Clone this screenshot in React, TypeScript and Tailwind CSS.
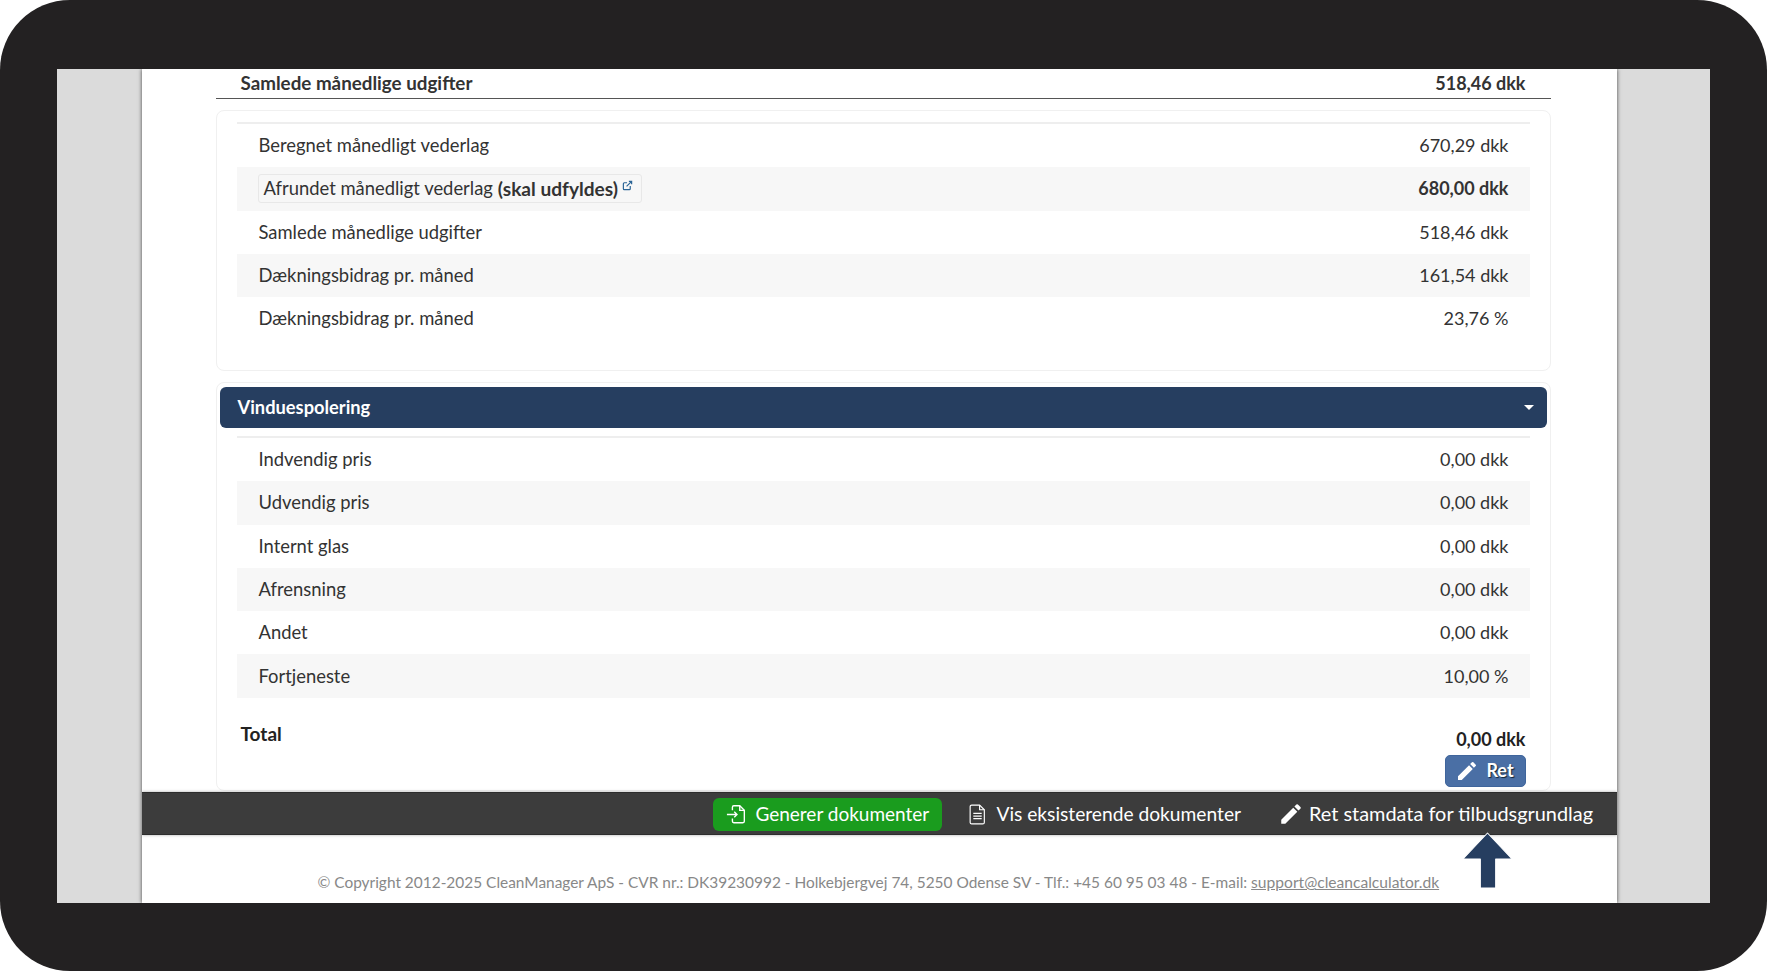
import React from "react";

const Pencil = ({ className }: { className: string }) => (
  <svg viewBox="0 0 24 24" className={className} fill="currentColor">
    <path d="M3 17.25V21h3.75L17.81 9.94l-3.75-3.75L3 17.25zM20.71 7.04a1 1 0 0 0 0-1.41l-2.34-2.34a1 1 0 0 0-1.41 0l-1.83 1.83 3.75 3.75 1.83-1.83z" />
  </svg>
);

const Row = ({ label, value, striped, bold }: { label: React.ReactNode; value: string; striped?: boolean; bold?: boolean }) => (
  <div className={`flex h-[43.3px] items-center justify-between pl-[22px] pr-[21px] leading-[27px] ${striped ? "bg-[#f7f7f7]" : ""}`}>
    <div className="text-[18.4px]">{label}</div>
    <div className={bold ? "font-bold" : ""}>{value}</div>
  </div>
);

export default function App() {
  return (
    <div className="h-[971px] w-[1767px] overflow-hidden bg-white font-['Lato',sans-serif] text-[18px] text-[#333]">
      <div className="h-[971px] rounded-[70px] bg-[#232122] pb-[68px] pl-[57px] pr-[57px] pt-[69px]">
        <div className="flex h-[834px] justify-start overflow-hidden bg-[#dbdbdb] pl-[84.5px]">
          <div className="relative flex h-[834px] w-[1475.5px] flex-col bg-white shadow-[0_0_4px_#444]">
            <div className="pl-[74px] pr-[66.5px]">
              <div className="flex h-[30px] items-center justify-between border-b border-[#555] pl-[25px] pr-[25px] font-bold">
                <span className="text-[18.8px]">Samlede månedlige udgifter</span>
                <span>518,46 dkk</span>
              </div>

              <div className="mt-[11px] h-[261px] rounded-lg border border-[#f0f0f0] px-[20px] pt-[11px]">
                <div className="border-t-2 border-[#eeeeee]" />
                <Row label="Beregnet månedligt vederlag" value="670,29 dkk" />
                <Row
                  striped
                  bold
                  value="680,00 dkk"
                  label={
                    <div className="-ml-[1px] flex h-[29px] w-[384px] items-center rounded-[3px] border border-[#e8e8e8] pl-[5px]">
                      <span>Afrundet månedligt vederlag</span>
                      <b className="ml-[5px] text-[19.1px]">(skal udfyldes)</b>
                      <svg viewBox="0 0 24 24" className="mb-[6px] ml-[4px] h-[11px] w-[11px] text-[#2a6496]" fill="none" stroke="currentColor" strokeWidth="2.6">
                        <path d="M18 13v6a2 2 0 0 1-2 2H5a2 2 0 0 1-2-2V8a2 2 0 0 1 2-2h6M15 3h6v6M10 14 21 3" />
                      </svg>
                    </div>
                  }
                />
                <Row label="Samlede månedlige udgifter" value="518,46 dkk" />
                <Row striped label="Dækningsbidrag pr. måned" value="161,54 dkk" />
                <Row label="Dækningsbidrag pr. måned" value="23,76 %" />
              </div>

              <div className="mt-[11px] h-[409px] rounded-lg border border-[#f0f0f0] px-[20px] pt-[4px]">
                <div className="-mx-[17px] flex h-[41px] items-center justify-between rounded-[6px] bg-[#263e60] pl-[18px] pr-[13px] font-bold text-white">
                  <span className="text-[18.3px]">Vinduespolering</span>
                  <span className="h-0 w-0 border-x-[5px] border-t-[5px] border-x-transparent border-t-white" />
                </div>
                <div className="mt-[8px] border-t-2 border-[#eeeeee]" />
                <Row label="Indvendig pris" value="0,00 dkk" />
                <Row striped label="Udvendig pris" value="0,00 dkk" />
                <Row label="Internt glas" value="0,00 dkk" />
                <Row striped label="Afrensning" value="0,00 dkk" />
                <Row label="Andet" value="0,00 dkk" />
                <Row striped label="Fortjeneste" value="10,00 %" />
                <div className="mx-[4px] flex justify-between pt-[24px] font-bold">
                  <span className="text-[19px] leading-[24px] text-[#222]">Total</span>
                  <div className="flex flex-col items-end pt-[4px]">
                    <span className="leading-[26px] text-[#222]">0,00 dkk</span>
                    <button className="mt-[3px] flex h-[32px] w-[81px] items-center justify-center gap-[7px] rounded-[5px] border border-[#3f659c] bg-[#4a6fa5] pr-[1px] font-bold text-white [text-shadow:1px_1px_1px_#123]">
                      <Pencil className="h-[24px] w-[24px]" />
                      <span>Ret</span>
                    </button>
                  </div>
                </div>
              </div>
            </div>

            <div className="mt-[1px] flex h-[43px] items-center justify-end border-y border-[#2d2d2d] bg-[#3c3c3c] pr-[24px] pt-[1px] text-[19px] text-white shadow-[0_0_3px_#aaa]">
              <button className="flex h-[33px] w-[229px] items-center gap-[7px] rounded-[6px] bg-[#1a9c1e] pl-[13px]">
                <svg viewBox="0 0 24 24" className="h-[22px] w-[22px]" fill="none" stroke="currentColor" strokeWidth="1.5">
                  <path d="M7 8V4.500A1.500 1.500 0 0 1 8.500 3H15l5 5v12a1.500 1.500 0 0 1-1.500 1.500h-10A1.500 1.500 0 0 1 7 20v-3" />
                  <path d="M15 3v5h5M1 12.500h11M9 9.500l3 3-3 3" />
                </svg>
                <span>Generer dokumenter</span>
              </button>
              <svg viewBox="0 0 16 20" className="ml-[27px] h-[21px] w-[17px]" fill="none" stroke="currentColor" strokeWidth="1.1">
                <path d="M2.500 1h7.500l4.500 4.500V17.500a1.500 1.500 0 0 1-1.500 1.500h-10.500a1.500 1.500 0 0 1-1.500-1.500V2.500A1.500 1.500 0 0 1 2.500 1z" />
                <path d="M10 1v4.500h4.500M4 9h8M4 11.500h8M4 14h8" />
              </svg>
              <span className="ml-[10px] text-[19.2px]">Vis eksisterende dokumenter</span>
              <Pencil className="ml-[37px] h-[26px] w-[26px]" />
              <span className="ml-[5px] text-[19.9px]">Ret stamdata for tilbudsgrundlag</span>
            </div>

            <div className="flex flex-1 items-end justify-start pb-[11px] pl-[176px] text-[15.43px] leading-[20px] text-[#888]">
              <span>
                © Copyright 2012-2025 CleanManager ApS - CVR nr.: DK39230992 - Holkebjergvej 74, 5250 Odense SV - Tlf.: +45 60 95 03 48 - E-mail:{" "}
                <span className="text-[15.6px] underline">support@cleancalculator.dk</span>
              </span>
            </div>

            <svg viewBox="0 0 50 57" className="absolute bottom-[14px] left-[1320px] h-[57px] w-[51px]" fill="#263e60" stroke="#ffffff" strokeWidth="1" strokeLinejoin="round" preserveAspectRatio="none">
              <path d="M25 1 49 27H33V56H18V27H1z" />
            </svg>
          </div>
        </div>
      </div>
    </div>
  );
}
